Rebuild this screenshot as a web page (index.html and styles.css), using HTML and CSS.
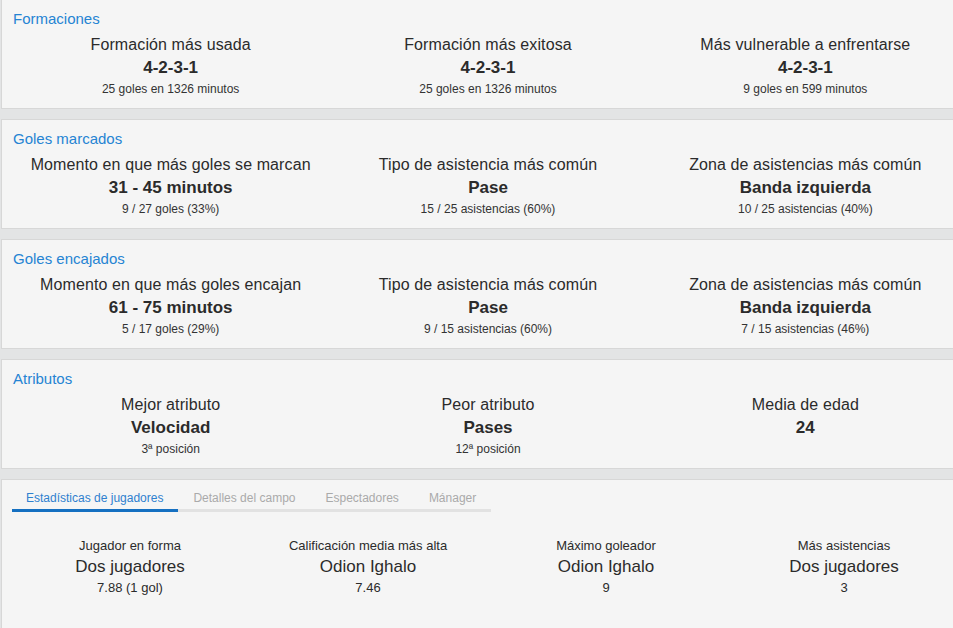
FILE: index.html
```html
<!DOCTYPE html>
<html lang="es">
<head>
<meta charset="utf-8">
<title>Estadísticas</title>
<link rel="stylesheet" href="styles.css">
</head>
<body>
<div class="page">
  <section class="card first">
    <h2 class="card-title">Formaciones</h2>
    <div class="cols">
      <div class="stat"><div class="label">Formación más usada</div><div class="value">4-2-3-1</div><div class="sub">25 goles en 1326 minutos</div></div>
      <div class="stat"><div class="label">Formación más exitosa</div><div class="value">4-2-3-1</div><div class="sub">25 goles en 1326 minutos</div></div>
      <div class="stat"><div class="label">Más vulnerable a enfrentarse</div><div class="value">4-2-3-1</div><div class="sub">9 goles en 599 minutos</div></div>
    </div>
  </section>
  <section class="card">
    <h2 class="card-title">Goles marcados</h2>
    <div class="cols">
      <div class="stat"><div class="label">Momento en que más goles se marcan</div><div class="value">31 - 45 minutos</div><div class="sub">9 / 27 goles (33%)</div></div>
      <div class="stat"><div class="label">Tipo de asistencia más común</div><div class="value">Pase</div><div class="sub">15 / 25 asistencias (60%)</div></div>
      <div class="stat"><div class="label">Zona de asistencias más común</div><div class="value">Banda izquierda</div><div class="sub">10 / 25 asistencias (40%)</div></div>
    </div>
  </section>
  <section class="card">
    <h2 class="card-title">Goles encajados</h2>
    <div class="cols">
      <div class="stat"><div class="label">Momento en que más goles encajan</div><div class="value">61 - 75 minutos</div><div class="sub">5 / 17 goles (29%)</div></div>
      <div class="stat"><div class="label">Tipo de asistencia más común</div><div class="value">Pase</div><div class="sub">9 / 15 asistencias (60%)</div></div>
      <div class="stat"><div class="label">Zona de asistencias más común</div><div class="value">Banda izquierda</div><div class="sub">7 / 15 asistencias (46%)</div></div>
    </div>
  </section>
  <section class="card">
    <h2 class="card-title">Atributos</h2>
    <div class="cols">
      <div class="stat"><div class="label">Mejor atributo</div><div class="value">Velocidad</div><div class="sub">3ª posición</div></div>
      <div class="stat"><div class="label">Peor atributo</div><div class="value">Pases</div><div class="sub">12ª posición</div></div>
      <div class="stat"><div class="label">Media de edad</div><div class="value">24</div><div class="sub"></div></div>
    </div>
  </section>
  <section class="card last">
    <nav class="tabs">
      <span class="tab active">Estadísticas de jugadores</span>
      <span class="tab">Detalles del campo</span>
      <span class="tab">Espectadores</span>
      <span class="tab">Mánager</span>
    </nav>
    <div class="players">
      <div class="pstat"><div class="plabel">Jugador en forma</div><div class="pname">Dos jugadores</div><div class="pvalue">7.88 (1 gol)</div></div>
      <div class="pstat"><div class="plabel">Calificación media más alta</div><div class="pname">Odion Ighalo</div><div class="pvalue">7.46</div></div>
      <div class="pstat"><div class="plabel">Máximo goleador</div><div class="pname">Odion Ighalo</div><div class="pvalue">9</div></div>
      <div class="pstat"><div class="plabel">Más asistencias</div><div class="pname">Dos jugadores</div><div class="pvalue">3</div></div>
    </div>
  </section>
</div>
</body>
</html>
```
FILE: styles.css
```css
html, body {
  margin: 0;
  padding: 0;
}
body {
  background: #e3e4e5;
  font-family: "Liberation Sans", Arial, sans-serif;
  color: #333;
  overflow: hidden;
  height: 628px;
}
.page {
  margin-left: 1px;
  width: 970px;
  display: flex;
  flex-direction: column;
  gap: 10px;
}
.card {
  background: #f5f5f5;
  border: 1px solid #d7d7d7;
  padding: 9px 8px 9px 8px;
  box-sizing: border-box;
  width: 970px;
}
.card.first {
  margin-top: -1px;
}
.card-title {
  margin: 0 0 5px 3px;
  font-size: 15px;
  line-height: 20px;
  font-weight: normal;
  color: #2584d3;
}
.cols {
  display: grid;
  grid-template-columns: repeat(3, 1fr);
  width: 952px;
  margin-left: 2px;
}
.stat {
  text-align: center;
}
.label {
  font-size: 16px;
  line-height: 22px;
  color: #2b2b2b;
  letter-spacing: 0.1px;
}
.value {
  font-size: 17px;
  line-height: 22px;
  margin-top: 1px;
  font-weight: bold;
  color: #2b2b2b;
}
.sub {
  font-size: 12px;
  line-height: 20px;
  height: 20px;
  color: #333;
}
.card.last {
  height: 160px;
  padding-top: 8px;
}
.tabs {
  display: inline-flex;
  margin-left: 2px;
  border-bottom: 3px solid #e2e2e2;
}
.tab {
  font-size: 12px;
  line-height: 14px;
  padding: 3px 15px 4px 15px;
  margin-bottom: -3px;
  border-bottom: 3px solid transparent;
  color: #aaaaaa;
  white-space: nowrap;
}
.tab.active {
  color: #2e80cf;
  border-bottom-color: #1570c1;
  padding-left: 14px;
}
.players {
  display: grid;
  grid-template-columns: repeat(4, 1fr);
  width: 952px;
  margin-left: 1px;
  margin-top: 25px;
}
.pstat {
  text-align: center;
}
.plabel {
  font-size: 13px;
  line-height: 18px;
  color: #2b2b2b;
}
.pname {
  font-size: 17px;
  line-height: 24px;
  color: #2b2b2b;
}
.pvalue {
  font-size: 13px;
  line-height: 18px;
  color: #2b2b2b;
}
```
